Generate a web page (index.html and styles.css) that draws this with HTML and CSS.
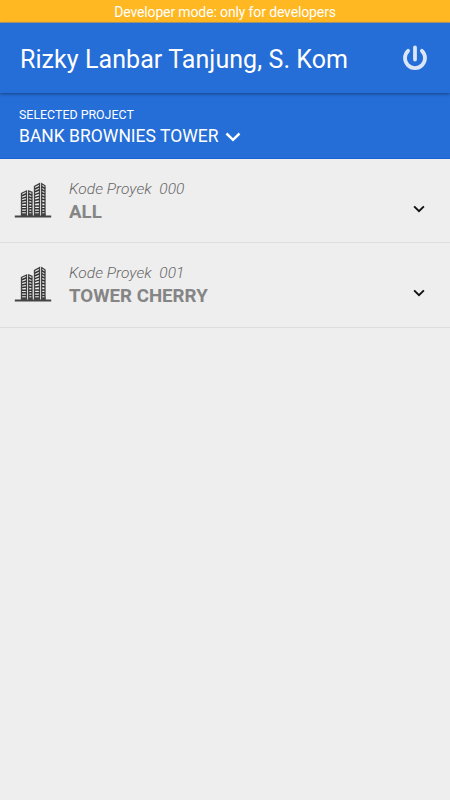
FILE: index.html
```html
<!DOCTYPE html>
<html lang="id">
<head>
<meta charset="utf-8">
<title>Projects</title>
<link rel="stylesheet" href="styles.css">
</head>
<body>
<svg class="defs" width="0" height="0" aria-hidden="true">
  <symbol id="towers" viewBox="0 0 38 38">
    <path class="ink" d="M.8 34.5h36.4v2H.8z"/>
    <path class="edge" d="M7.5 35V12.3l5-2.3v25M14.7 35V10l3.3 1.3V35M20.5 35V5.4l5-2.8V35M27.7 35V2.6l3.3 2.2V35"/>
    <path class="floors" d="M8 14.8l4.5-2M8 17.4l4.5-1.4M8 20l4.5-1M8 22.6l4.5-.6M8 25.2h4.5M8 27.8h4.5M8 30.4h4.5M14.7 12.8l3.3 1.4M14.7 16l3.3 1M14.7 19l3.3.7M14.7 22l3.3.4M14.7 25.2H18M14.7 27.8H18M14.7 30.4H18M21 8l4.5-2.4M21 10.8l4.5-2M21 13.6l4.5-1.7M21 16.4l4.5-1.3M21 19.2l4.5-1M21 22l4.5-.6M21 25h4.5M21 27.8h4.5M21 30.4h4.5M27.7 5.6 31 7.5M27.7 8.7l3.3 1.6M27.7 11.8l3.3 1.3M27.7 15l3.3 1M27.7 18.2l3.3.6M27.7 21.6l3.3.4M27.7 25H31M27.7 27.8H31M27.7 30.4H31"/>
    <path class="ink" d="M7 32.2h6V35H7zM14.2 32.2h4.3V35h-4.3zM20 32.2h6V35h-6zM27.2 32.2h4.3V35h-4.3z"/>
  </symbol>
  <symbol id="chevron" viewBox="0 0 16 10">
    <path d="M1.5 1.5 8 7.8l6.5-6.3"/>
  </symbol>
</svg>
<div class="banner"><span>Developer mode: only for developers</span></div>
<header class="appbar">
  <h1>Rizky Lanbar Tanjung, S. Kom</h1>
  <svg class="power" viewBox="0 0 26 26"><path d="M13 2.5v12M6.1 5.8a10 10 0 1 0 13.8 0"/></svg>
</header>
<section class="project">
  <div class="label">SELECTED PROJECT</div>
  <div class="choice"><span>BANK BROWNIES TOWER</span><svg class="chev"><use href="#chevron"/></svg></div>
</section>
<main>
  <div class="row">
    <svg class="building"><use href="#towers"/></svg>
    <div class="info"><div class="code">Kode Proyek&nbsp; 000</div><div class="name">ALL</div></div>
    <svg class="chev"><use href="#chevron"/></svg>
  </div>
  <div class="row">
    <svg class="building"><use href="#towers"/></svg>
    <div class="info"><div class="code">Kode Proyek&nbsp; 001</div><div class="name">TOWER CHERRY</div></div>
    <svg class="chev"><use href="#chevron"/></svg>
  </div>
</main>
</body>
</html>
```
FILE: styles.css
```css
* { box-sizing: border-box; }
body { margin: 0; min-height: 800px; background: #eee; font-family: Roboto, sans-serif; }
svg { display: block; flex: none; }
.defs { position: absolute; }
.banner { height: 23px; background: #ffb822; border-bottom: 1px solid #ad9b74; color: #fff; font-size: 14px; letter-spacing: -.13px; line-height: 25px; text-align: center; white-space: nowrap; }
.appbar { position: relative; display: flex; justify-content: space-between; align-items: center; height: 70px; padding: 0 22px 0 20px; background: #256dd7; color: #fff; box-shadow: 0 1px 3px rgba(0, 0, 0, .4); }
h1 { margin: 3px 0 0; font-size: 25px; font-weight: 400; letter-spacing: .07px; line-height: 31px; white-space: nowrap; }
.power { width: 26px; height: 26px; fill: none; stroke: #dbe7f9; stroke-width: 3.8; stroke-linecap: round; }
.project { height: 66px; padding: 14px 19px 0; background: #256dd7; border-bottom: 1px solid #1763d3; color: #fff; }
.label { font-size: 12.4px; line-height: 16px; }
.choice { display: flex; align-items: center; gap: 7px; font-size: 17.5px; line-height: 27px; white-space: nowrap; }
.chev { width: 16px; height: 10px; fill: none; stroke: #fff; stroke-width: 2.5; }
.choice .chev { margin-top: 1px; }
.row { display: flex; align-items: flex-start; height: 84px; padding: 0 25px 0 14px; border-bottom: 1px solid #ddd; }
.row + .row { height: 85px; }
.building { width: 38px; height: 38px; margin-top: 22px; }
.ink { fill: #444; }
.edge { fill: none; stroke: #444; stroke-width: 1.3; }
.floors { fill: none; stroke: #333; stroke-width: 1.5; }
.info { flex: 1; margin: 20px 0 0 17px; color: #858585; white-space: nowrap; }
.code { width: 115.5px; overflow: hidden; font-size: 15.5px; font-style: italic; font-weight: 300; letter-spacing: .04px; line-height: 20px; color: #666; }
.name { font-size: 18.7px; font-weight: 700; line-height: 26px; }
.row .chev { width: 12px; height: 8px; margin-top: 46px; stroke: #111; stroke-width: 2.6; }
```
